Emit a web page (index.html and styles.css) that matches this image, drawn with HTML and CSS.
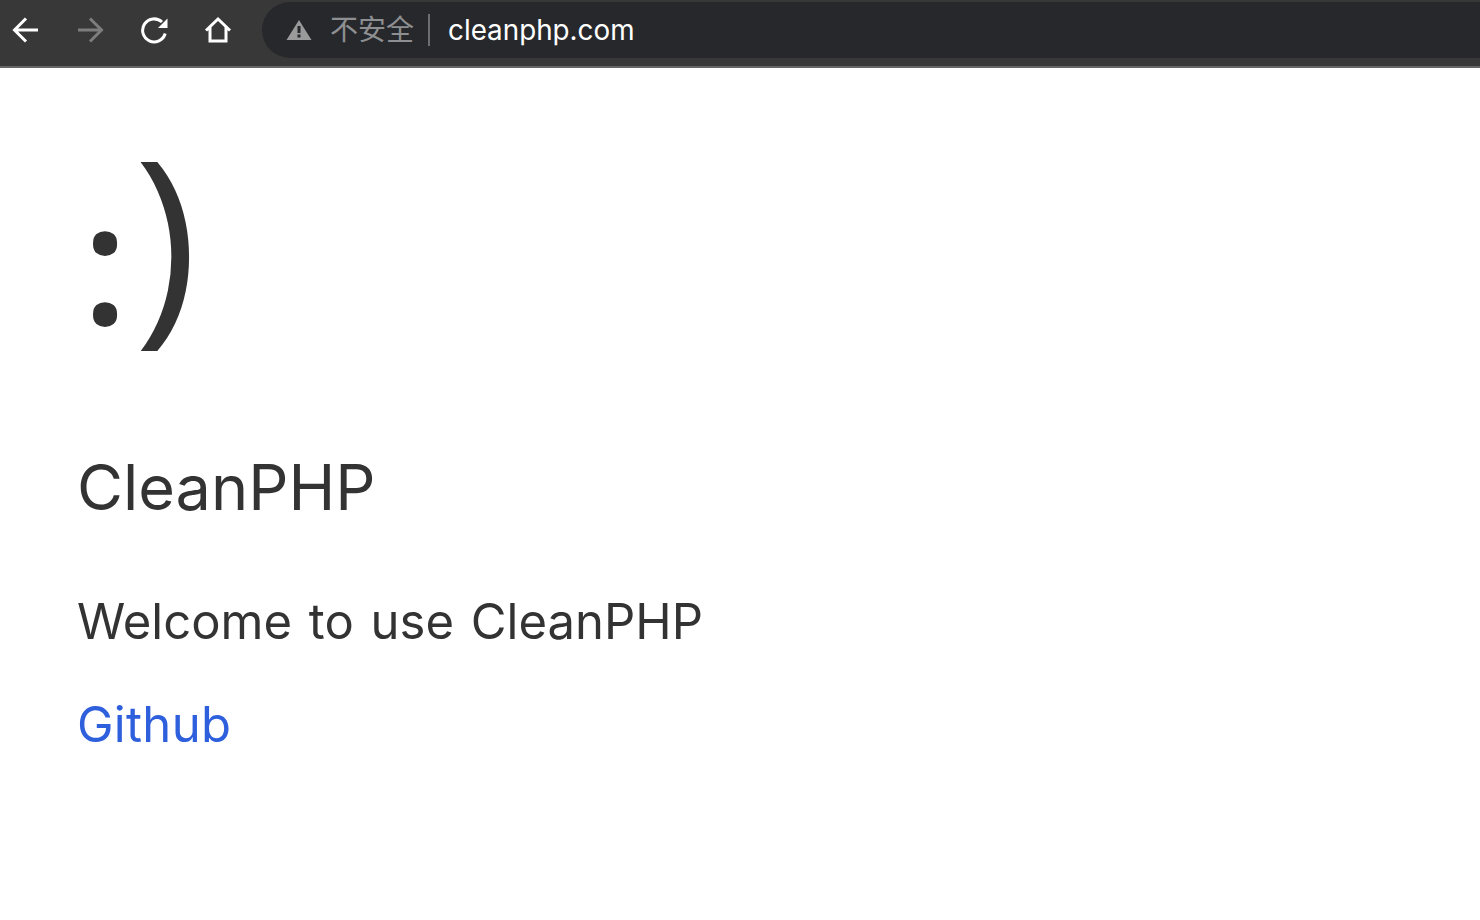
FILE: index.html
```html
<!DOCTYPE html>
<html lang="zh-CN">
<head>
  <meta charset="UTF-8">
  <title>CleanPHP</title>
  <link rel="stylesheet" href="styles.css">
</head>
<body>
  <div class="toolbar">
    <div class="nav-btns">
      <svg class="nav-icon" viewBox="0 0 28 28"><path d="M26 14H2.500M14 2.500 2.500 14 14 25.500"/></svg>
      <svg class="nav-icon off" viewBox="0 0 28 28"><path d="M2 14h23.500M14 2.500 25.500 14 14 25.500"/></svg>
      <svg class="nav-icon" viewBox="0 0 28 28"><path d="M25.200 17.500A11.500 11.500 0 1 1 22 6"/><path class="fill" d="M27.500 2.500V12H18z"/></svg>
      <svg class="nav-icon" viewBox="0 0 28 28"><path d="M2 14.500 14 3l12 11.500M6 11v14h16V11"/></svg>
    </div>
    <div class="address">
      <svg class="warn" viewBox="0 0 26 22"><path d="M13 1 25.500 21H.5z"/><rect x="11.500" y="7" width="3" height="7"/><rect x="11.500" y="15.500" width="3" height="3"/></svg>
      <span class="not-secure">不安全</span>
      <span class="url">cleanphp.com</span>
    </div>
  </div>

  <div class="content">
    <h1 class="smile"><span class="eyes">:</span><span class="mouth">)</span></h1>
    <h2 class="title">CleanPHP</h2>
    <p class="welcome">Welcome to use CleanPHP</p>
    <a class="link" href="#">Github</a>
  </div>
</body>
</html>
```

FILE: styles.css
```css
body {
  margin: 0;
  background: #fff;
  font-family: Inter, "Noto Sans CJK SC", sans-serif;
  color: #333;
}

.toolbar {
  display: flex;
  align-items: flex-start;
  padding-top: 2px;
  height: 64px;
  background: #383838;
  border-bottom: 2px solid #666;
}
.nav-btns {
  display: flex;
  gap: 36px;
  padding: 14px 0 0 12px;
  width: 262px;
  box-sizing: border-box;
}
.nav-icon {
  width: 28px;
  height: 28px;
  fill: none;
  stroke: #fff;
  stroke-width: 3;
}
.nav-icon.off { stroke: #7d7d7d; }
.nav-icon .fill { fill: #fff; stroke: none; }

.address {
  flex: 1;
  display: flex;
  align-items: center;
  height: 56px;
  padding-left: 24px;
  background: #26282c;
  border-radius: 28px 0 0 28px;
}
.warn {
  width: 26px;
  height: 22px;
  fill: #9a9a9a;
}
.warn rect { fill: #26282c; }
.not-secure {
  margin-left: 18px;
  padding-right: 14px;
  border-right: 2px solid #6c6d70;
  font-size: 28px;
  line-height: 32px;
  color: #8e8f91;
}
.url {
  margin-left: 18px;
  font-size: 27.8px;
  color: #fff;
}

.content {
  display: flex;
  flex-direction: column;
  align-items: flex-start;
  padding: 45px 0 0 77px;
}
.smile {
  margin: 0;
  font-family: "Open Sans", sans-serif;
  font-weight: normal;
  font-size: 216px;
  line-height: 240px;
  height: 240px;
}
.eyes {
  margin-left: 5px;
  font-size: 168px;
  font-weight: 600;
  vertical-align: -8px;
}
.mouth { margin-left: 6px; }
.title {
  margin: 98px 0 0;
  font-size: 63px;
  font-weight: normal;
  line-height: 72px;
}
.welcome {
  margin: 71px 0 0;
  font-size: 49px;
  word-spacing: 3px;
  line-height: 56px;
}
.link {
  margin-top: 47px;
  font-size: 49px;
  letter-spacing: 0.3px;
  line-height: 56px;
  color: #2e5fdc;
  text-decoration: none;
}
```
